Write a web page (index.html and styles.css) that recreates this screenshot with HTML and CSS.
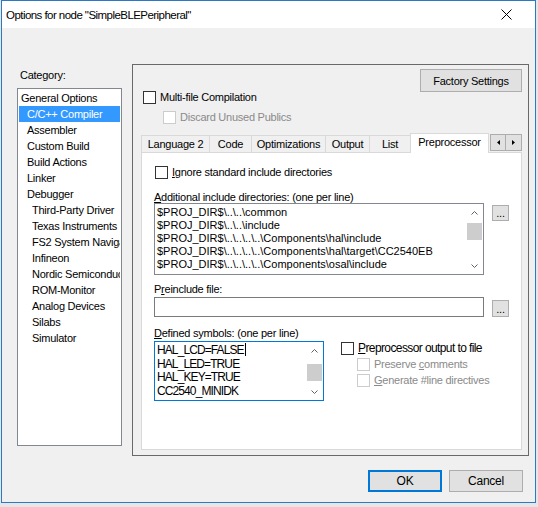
FILE: index.html
```html
<!DOCTYPE html>
<html lang="en">
<head>
  <meta charset="UTF-8">
  <title>Options for node "SimpleBLEPeripheral"</title>
  <link rel="stylesheet" href="styles.css">
</head>
<body>
  <div class="window">
    <div class="titlebar">
      <span class="title">Options for node "SimpleBLEPeripheral"</span>
      <svg class="close" width="11" height="11" viewBox="0 0 11 11">
        <path d="M0.5 0.5 L10.5 10.5 M10.5 0.5 L0.5 10.5" stroke="#000" stroke-width="1"/>
      </svg>
    </div>

    <div class="main">
      <div class="left">
        <div class="cat-label">Category:</div>
        <div class="catlist">
          <div class="cat-item lvl0">General Options</div>
          <div class="cat-item lvl1 selected">C/C++ Compiler</div>
          <div class="cat-item lvl1">Assembler</div>
          <div class="cat-item lvl1">Custom Build</div>
          <div class="cat-item lvl1">Build Actions</div>
          <div class="cat-item lvl1">Linker</div>
          <div class="cat-item lvl1">Debugger</div>
          <div class="cat-item lvl2">Third-Party Driver</div>
          <div class="cat-item lvl2">Texas Instruments</div>
          <div class="cat-item lvl2">FS2 System Navigator</div>
          <div class="cat-item lvl2">Infineon</div>
          <div class="cat-item lvl2">Nordic Semiconductor</div>
          <div class="cat-item lvl2">ROM-Monitor</div>
          <div class="cat-item lvl2">Analog Devices</div>
          <div class="cat-item lvl2">Silabs</div>
          <div class="cat-item lvl2">Simulator</div>
        </div>
      </div>

      <div class="panel">
        <div class="top">
          <div class="top-left">
            <div class="check-row">
              <span class="cb"></span>
              <span>Multi-file Compilation</span>
            </div>
            <div class="check-row sub disabled">
              <span class="cb"></span>
              <span>Discard Unused Publics</span>
            </div>
          </div>
          <button class="btn factory">Factory Settings</button>
        </div>

        <div class="tabctl">
          <div class="tabs">
            <div class="tab" style="width:68px">Language 2</div>
            <div class="tab" style="width:42px">Code</div>
            <div class="tab" style="width:74px">Optimizations</div>
            <div class="tab" style="width:44px">Output</div>
            <div class="tab" style="width:41px">List</div>
            <div class="tab active" style="width:79px">Preprocessor</div>
            <div class="tab-arrows">
              <span class="arr"><svg width="3" height="5" viewBox="0 0 3 5"><path d="M3 0 L0 2.5 L3 5 Z" fill="#000"/></svg></span>
              <span class="arr"><svg width="3" height="5" viewBox="0 0 3 5"><path d="M0 0 L3 2.5 L0 5 Z" fill="#000"/></svg></span>
            </div>
          </div>

          <div class="tabbody">
            <div class="check-row ignore">
              <span class="cb"></span>
              <span><u>I</u>gnore standard include directories</span>
            </div>

            <div class="field-label first"><u>A</u>dditional include directories: (one per line)</div>
            <div class="field-row">
              <div class="listbox">
                <div class="lines">
                  <div>$PROJ_DIR$\..\..\common</div>
                  <div>$PROJ_DIR$\..\..\include</div>
                  <div>$PROJ_DIR$\..\..\..\..\Components\hal\include</div>
                  <div>$PROJ_DIR$\..\..\..\..\Components\hal\target\CC2540EB</div>
                  <div>$PROJ_DIR$\..\..\..\..\Components\osal\include</div>
                </div>
                <div class="vscroll">
                  <span class="sarrow"><svg width="7" height="4" viewBox="0 0 7 4"><path d="M0.5 3.5 L3.5 0.5 L6.5 3.5" stroke="#606060" fill="none"/></svg></span>
                  <span class="thumb"></span>
                  <span class="sarrow down"><svg width="7" height="4" viewBox="0 0 7 4"><path d="M0.5 0.5 L3.5 3.5 L6.5 0.5" stroke="#606060" fill="none"/></svg></span>
                </div>
              </div>
              <button class="btn dots">...</button>
            </div>

            <div class="field-label">P<u>r</u>einclude file:</div>
            <div class="field-row">
              <div class="input"></div>
              <button class="btn dots low">...</button>
            </div>

            <div class="field-label defined"><u>D</u>efined symbols: (one per line)</div>
            <div class="lower">
              <div class="symbols">
                <div class="lines">
                  <div>HAL_LCD=FALSE<span class="caret"></span></div>
                  <div>HAL_LED=TRUE</div>
                  <div>HAL_KEY=TRUE</div>
                  <div>CC2540_MINIDK</div>
                </div>
                <div class="vscroll">
                  <span class="sarrow"><svg width="7" height="4" viewBox="0 0 7 4"><path d="M0.5 3.5 L3.5 0.5 L6.5 3.5" stroke="#606060" fill="none"/></svg></span>
                  <span class="thumb mid"></span>
                  <span class="sarrow down"><svg width="7" height="4" viewBox="0 0 7 4"><path d="M0.5 0.5 L3.5 3.5 L6.5 0.5" stroke="#606060" fill="none"/></svg></span>
                </div>
              </div>
              <div class="pp-opts">
                <div class="check-row small big">
                  <span class="cb"></span>
                  <span><u>P</u>reprocessor output to file</span>
                </div>
                <div class="check-row small sub2 disabled">
                  <span class="cb"></span>
                  <span>Preserve <u>c</u>omments</span>
                </div>
                <div class="check-row small sub2 disabled">
                  <span class="cb"></span>
                  <span><u>G</u>enerate #line directives</span>
                </div>
              </div>
            </div>
          </div>
        </div>
      </div>
    </div>

    <div class="buttons">
      <button class="btn dlg default">OK</button>
      <button class="btn dlg">Cancel</button>
    </div>
  </div>
</body>
</html>
```

FILE: styles.css
```css
* {
  box-sizing: border-box;
}
body {
  margin: 0;
  background: #e6e6e6;
  font-family: "Liberation Sans", Arial, sans-serif;
  font-size: 11px;
  letter-spacing: -0.25px;
  color: #000;
}
.window {
  margin-left: 1px;
  width: 535px;
  height: 503px;
  border: 1px solid #2b79c5;
  background: #f0f0f0;
}
.titlebar {
  height: 27px;
  background: #fff;
  display: flex;
  align-items: center;
  justify-content: space-between;
  padding-left: 4px;
  font-size: 11.5px;
  letter-spacing: -0.55px;
}
.close {
  margin-right: 23px;
}
.main {
  display: flex;
  padding: 36px 0 0 15px;
}
.left {
  width: 105px;
  padding-top: 5px;
}
.cat-label {
  line-height: 12px;
  margin-left: 3px;
}
.catlist {
  margin-top: 7px;
  height: 358px;
  border: 1px solid #828790;
  background: #fff;
  padding-top: 1px;
  overflow: hidden;
}
.cat-item {
  height: 16px;
  line-height: 16px;
  margin: 0 1px;
  white-space: nowrap;
  overflow: hidden;
}
.lvl0 { padding-left: 2px; }
.lvl1 { padding-left: 8px; }
.lvl2 { padding-left: 13px; }
.selected {
  background: #3399ff;
  color: #fff;
}
.panel {
  margin-left: 10px;
  width: 397px;
  height: 392px;
  border: 1px solid #696969;
  padding: 4px 6px 0 8px;
}
.top {
  display: flex;
  justify-content: space-between;
  align-items: flex-start;
}
.top-left {
  padding: 18px 0 0 2px;
}
.check-row {
  display: flex;
  align-items: center;
  gap: 4px;
  height: 20px;
  white-space: nowrap;
}
.check-row.sub {
  padding-left: 20px;
}
.cb {
  width: 13px;
  height: 13px;
  border: 1px solid #333;
  background: #fff;
  flex: none;
}
.disabled {
  color: #8a8a8a;
}
.disabled .cb {
  border-color: #cccccc;
}
.btn {
  font-family: "Liberation Sans", Arial, sans-serif;
  font-size: 11px;
  letter-spacing: -0.25px;
  background: #e1e1e1;
  border: 1px solid #adadad;
  padding: 0;
  color: #000;
}
.factory {
  width: 102px;
  height: 23px;
}
.tabctl {
  margin-top: 6px;
}
.tabs {
  display: flex;
  align-items: flex-start;
  height: 20px;
  margin-bottom: -1px;
  position: relative;
}
.tab {
  margin-top: 2px;
  height: 17px;
  line-height: 17px;
  border: 1px solid #d9d9d9;
  border-bottom: none;
  border-right: none;
  background: #f0f0f0;
  text-align: center;
  white-space: nowrap;
}
.tab.active {
  margin-top: 0;
  height: 20px;
  line-height: 16px;
  background: #fff;
  border-right: 1px solid #d9d9d9;
}
.tab-arrows {
  margin-left: auto;
  margin-top: 1px;
  display: flex;
}
.arr {
  width: 16px;
  height: 17px;
  border: 1px solid #adadad;
  background: #e1e1e1;
  display: flex;
  align-items: center;
  justify-content: center;
}
.arr + .arr {
  border-left: none;
}
.tabbody {
  height: 298px;
  border: 1px solid #d9d9d9;
  background: #fff;
  padding: 9px 12px 0 12px;
}
.check-row.ignore {
  padding-left: 1px;
}
.field-label {
  line-height: 12px;
  margin-top: 8px;
  margin-bottom: 2px;
}
.field-label.first {
  margin-top: 9px;
  margin-bottom: 0;
}
.field-label.defined {
  margin-top: 10px;
}
.field-row {
  display: flex;
  align-items: flex-start;
}
.listbox {
  width: 330px;
  height: 72px;
  border: 1px solid #828790;
  display: flex;
  letter-spacing: 0;
}
.lines {
  flex: 1;
  padding: 2px 0 0 2px;
  line-height: 13px;
  white-space: nowrap;
  overflow: hidden;
}
.vscroll {
  width: 17px;
  display: flex;
  flex-direction: column;
  align-items: center;
}
.sarrow {
  height: 17px;
  width: 17px;
  display: flex;
  align-items: center;
  justify-content: center;
}
.sarrow.down {
  margin-top: auto;
}
.thumb {
  width: 15px;
  height: 17px;
  margin-top: 2px;
  background: #cdcdcd;
}
.thumb.mid {
  margin-top: 5px;
}
.dots {
  margin-left: 8px;
  margin-top: 2px;
  width: 17px;
  height: 16px;
  line-height: 10px;
}
.dots.low {
  margin-top: 3px;
  height: 17px;
}
.input {
  width: 330px;
  height: 20px;
  border: 1px solid #7a7a7a;
  background: #fff;
}
.lower {
  display: flex;
  align-items: flex-start;
}
.symbols {
  width: 170px;
  height: 60px;
  border: 1px solid #0078d7;
  display: flex;
  font-size: 12px;
  letter-spacing: -0.9px;
}
.symbols .lines {
  padding: 1px 0 0 2px;
  line-height: 13.5px;
}
.caret {
  display: inline-block;
  width: 1px;
  height: 13px;
  margin-left: 1px;
  background: #000;
  vertical-align: -2px;
}
.pp-opts {
  margin-left: 17px;
  margin-top: -1px;
}
.check-row.small {
  height: 16px;
}
.check-row.big {
  font-size: 12px;
  letter-spacing: -0.6px;
}
.check-row.sub2 {
  padding-left: 16px;
}
.buttons {
  display: flex;
  justify-content: flex-end;
  gap: 7px;
  padding-right: 12px;
  margin-top: 14px;
}
.dlg {
  width: 74px;
  height: 22px;
  font-size: 12px;
}
.dlg.default {
  border: 2px solid #0078d7;
}
```
